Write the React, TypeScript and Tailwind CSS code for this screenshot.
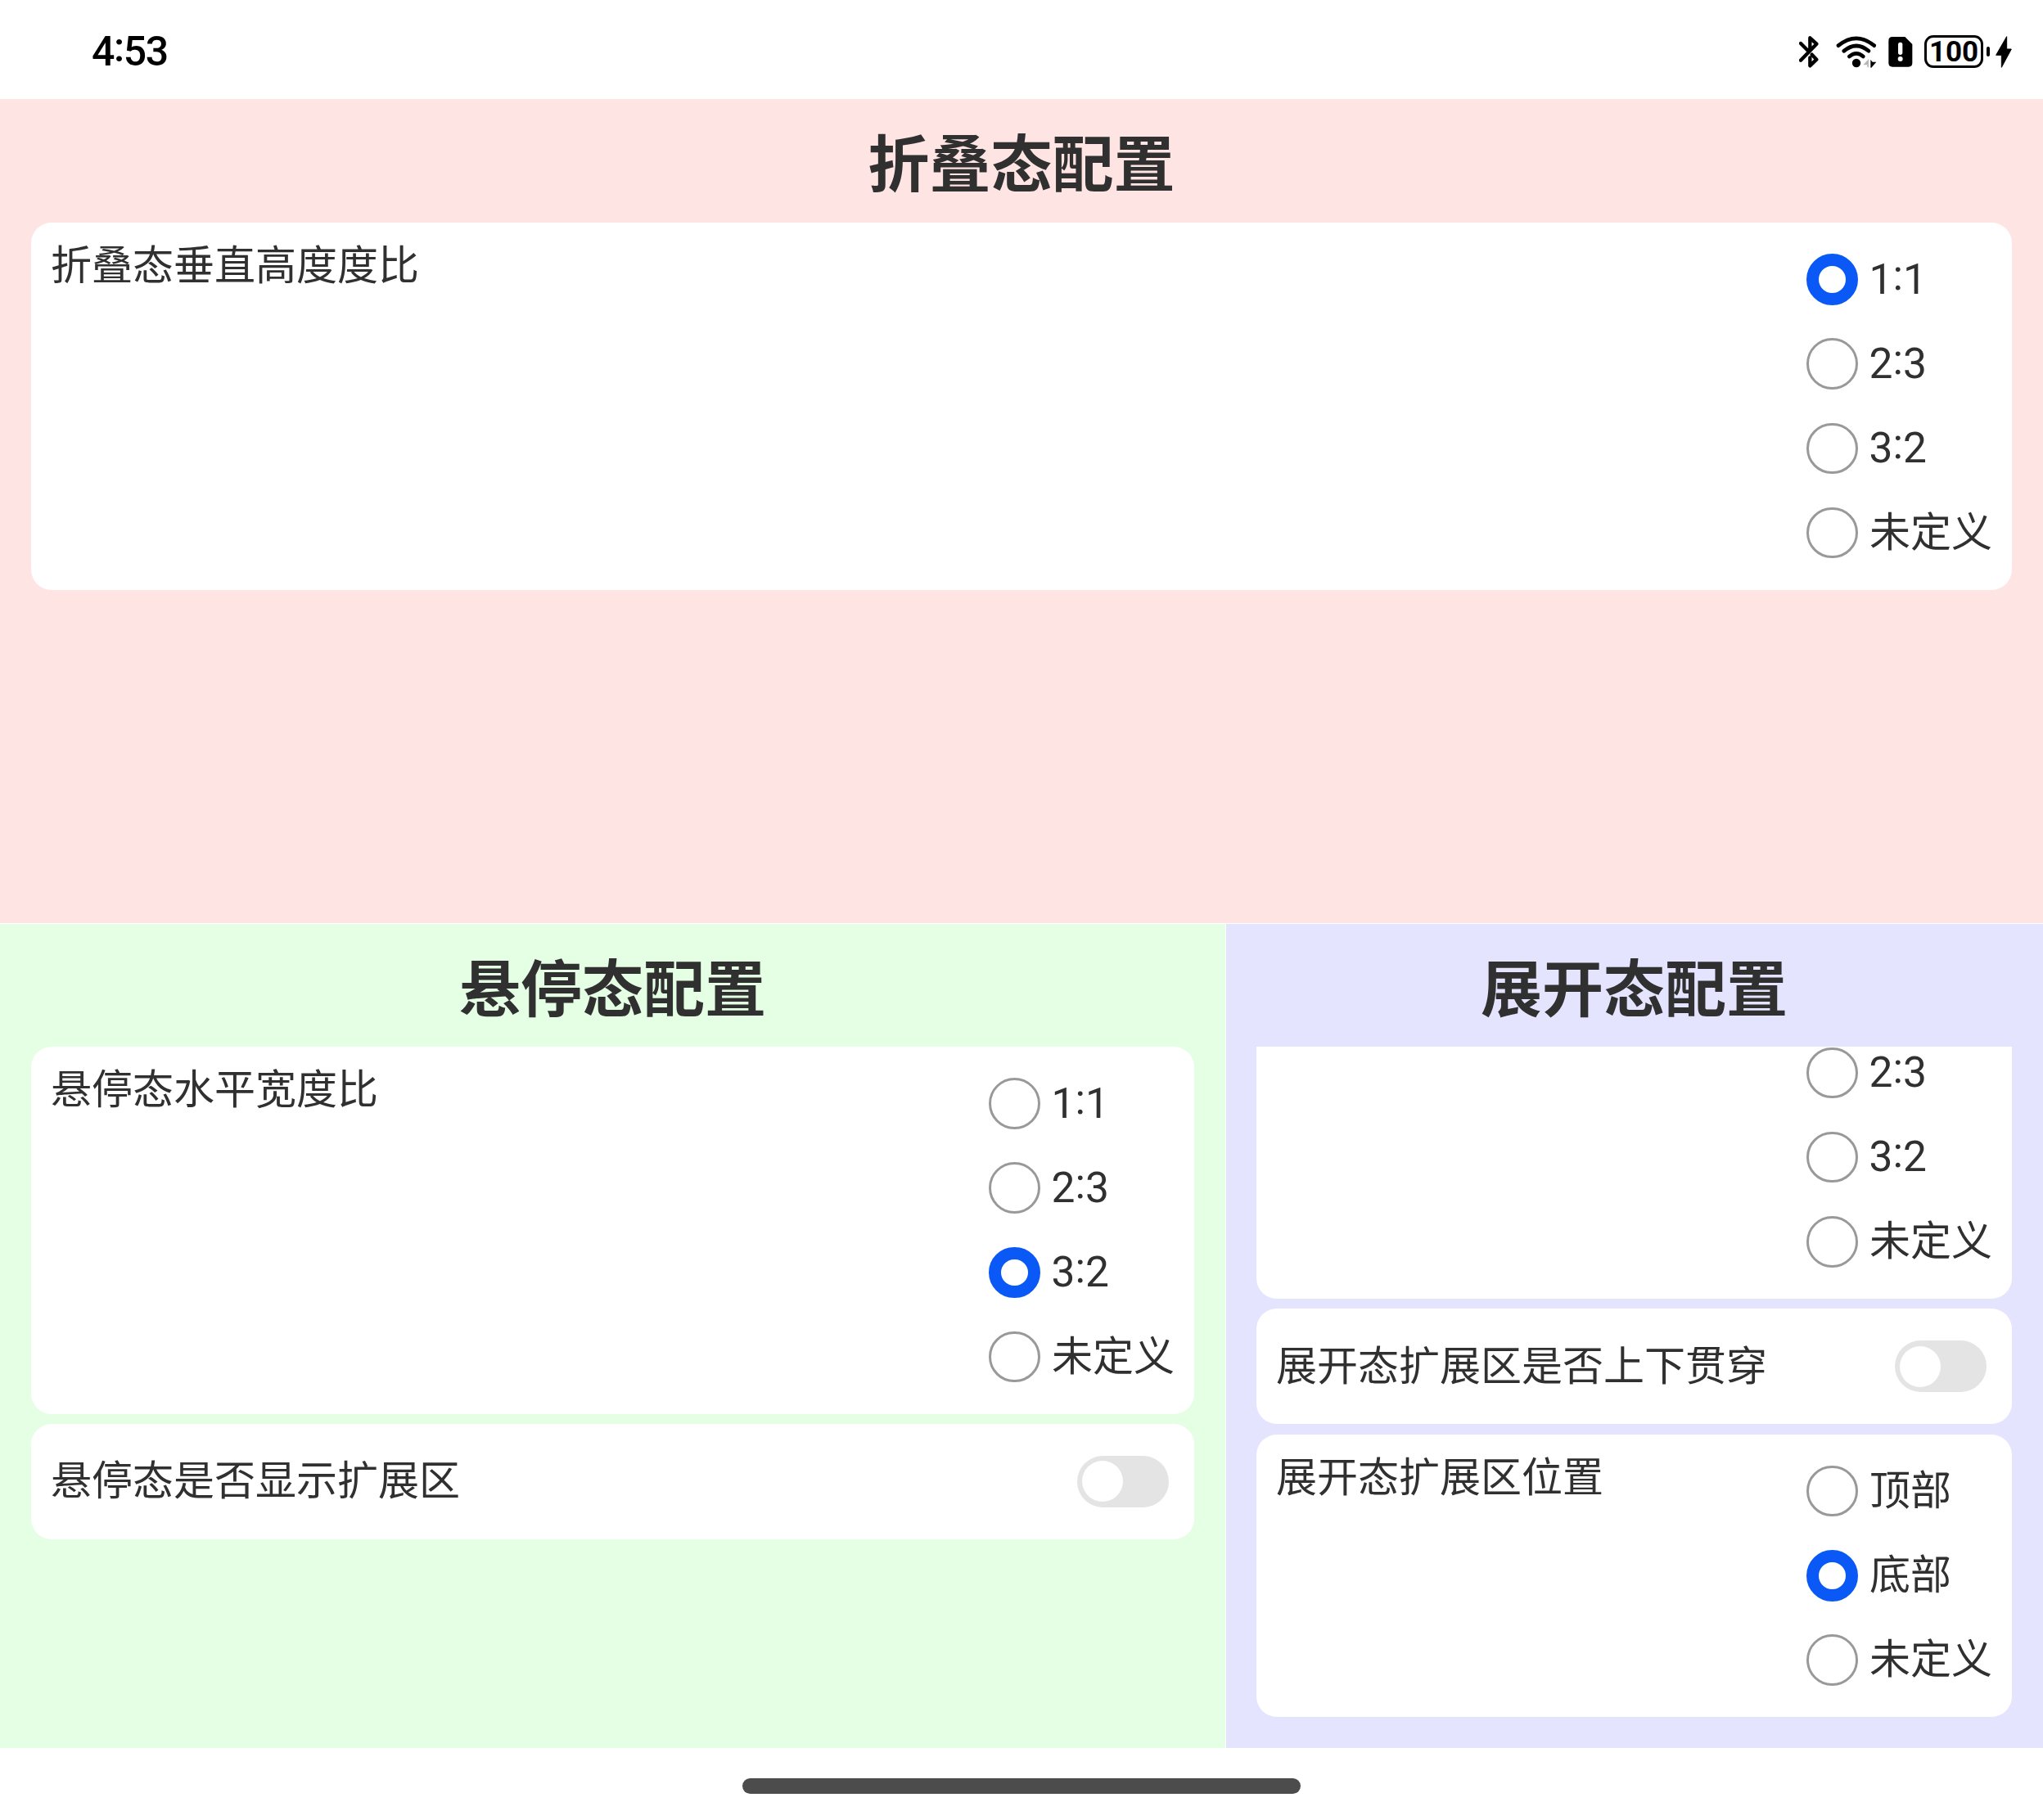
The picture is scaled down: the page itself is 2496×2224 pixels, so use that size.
import React from 'react';

const FONT = "font-['Roboto','Noto_Sans_CJK_SC',sans-serif]";

function Ratio({ text }: { text: string }) {
  const [left, right] = text.split(':');
  if (right === undefined) return <>{text}</>;
  return (
    <>
      {left}
      <span className="relative -top-[0.1em]">:</span>
      {right}
    </>
  );
}

function Radio({ label, checked }: { label: string; checked?: boolean }) {
  const isRatio = label.includes(':');
  return (
    <div className="flex h-[103.1px] items-center">
      <div
        className={
          checked
            ? 'size-[62.5px] shrink-0 rounded-full border-[15.6px] border-[#0a59f7] bg-white'
            : 'size-[62.5px] shrink-0 rounded-full border-[3px] border-[#999999] bg-white'
        }
      />
      <span
        className={
          isRatio
            ? 'ml-[14px] whitespace-nowrap text-[51.5px] leading-[66px]'
            : 'ml-[14.5px] whitespace-nowrap text-[50px] leading-[66px]'
        }
      >
        <Ratio text={label} />
      </span>
    </div>
  );
}

function RadioCard({ label, options, value }: { label?: string; options: string[]; value?: string }) {
  return (
    <div className="flex shrink-0 justify-between rounded-[25px] bg-white py-[18.1px] pl-[24px] pr-[25px]">
      <div className="whitespace-nowrap pt-[2px] text-[50px] leading-[66px]">{label}</div>
      <div className="flex w-[226px] flex-col">
        {options.map((o) => (
          <Radio key={o} label={o} checked={o === value} />
        ))}
      </div>
    </div>
  );
}

function ToggleCard({ label }: { label: string }) {
  return (
    <div className="flex h-[140.6px] shrink-0 items-center justify-between rounded-[25px] bg-white pl-[24px] pr-[31px]">
      <div className="whitespace-nowrap text-[50px] leading-[66px]">{label}</div>
      <div className="flex h-[62.5px] w-[112.5px] items-center rounded-full bg-[#e4e4e4] pl-[6.25px]">
        <div className="size-[50px] rounded-full bg-white" />
      </div>
    </div>
  );
}

function Title({ children }: { children: string }) {
  return (
    <h1 className="flex h-full items-center justify-center pt-[11px] text-[75px] font-bold leading-[100px]">
      {children}
    </h1>
  );
}

function StatusIcons() {
  return (
    <div className="flex h-[42px] items-center">
      <svg className="h-[42px] w-[26px]" viewBox="56 65 78 126" fill="none" stroke="#000" strokeWidth="13" strokeLinecap="round" strokeLinejoin="round">
        <path d="M62 98 L88 124 M62 160 L120 100 L96 78 V122 M103 139 L120 157 L96 180 V150" />
      </svg>
      <svg className="ml-[18px] h-[42px] w-[52px]" viewBox="185 65 156 126" fill="none" stroke="#000" strokeWidth="14" strokeLinecap="round">
        <path d="M197 106 Q263 53 328 106" />
        <path d="M217 126 Q263 88 308 126" />
        <path d="M237 146 Q263 124 288 146" />
        <circle cx="263" cy="170" r="15.5" fill="#000" stroke="none" />
        <path d="M308 155 V186 H303 V177 H288 Z" fill="#b8b8b8" stroke="none" />
        <path d="M315 158 L322 166 H336 L318 187 H315 Z" fill="#000" stroke="none" />
      </svg>
      <svg className="ml-[13px] h-[42px] w-[30px]" viewBox="379 65 90 126">
        <path d="M394 74 H440 L467 101 V170 Q467 184 453 184 H394 Q380 184 380 170 V88 Q380 74 394 74 Z" fill="#000" />
        <path d="M423 102 V132" stroke="#fff" strokeWidth="16" strokeLinecap="round" />
        <circle cx="423" cy="155" r="9" fill="#fff" />
      </svg>
      <div className="ml-[14px] flex h-[40px] w-[72px] items-center justify-center rounded-[11px] border-[3px] border-black pt-[2px] text-[35px] font-bold leading-none">
        100
      </div>
      <div className="ml-[4px] h-[12px] w-[4px] rounded-[2px] bg-black" />
      <svg className="ml-[7px] h-[42px] w-[20px]" viewBox="773 65 60 126">
        <path d="M814 73 V119 H831 L795 186 V141 H775 Z" fill="#000" stroke="#000" strokeWidth="3" strokeLinejoin="round" />
      </svg>
    </div>
  );
}

export default function App() {
  return (
    <div className={`flex h-[2224px] w-[2496px] flex-col overflow-hidden bg-white text-[#303030] ${FONT}`}>
      <header className="flex h-[121px] shrink-0 items-center justify-between pl-[112px] pr-[38px] pt-[4px] text-black">
        <div className="text-[50px] font-medium leading-none tracking-[-1.4px]">
          <Ratio text="4:53" />
        </div>
        <StatusIcons />
      </header>

      <section className="flex h-[1007px] shrink-0 flex-col bg-[#ffe4e4] px-[38px]">
        <div className="h-[151px] shrink-0">
          <Title>折叠态配置</Title>
        </div>
        <RadioCard label="折叠态垂直高度度比" options={['1:1', '2:3', '3:2', '未定义']} value="1:1" />
      </section>

      <div className="mt-px flex h-[1007px] shrink-0">
        <section className="flex w-[1497px] flex-col bg-[#e4ffe3] pl-[38px] pr-[38px]">
          <div className="h-[150px] shrink-0">
            <Title>悬停态配置</Title>
          </div>
          <div className="flex flex-col gap-[12.5px]">
            <RadioCard label="悬停态水平宽度比" options={['1:1', '2:3', '3:2', '未定义']} value="3:2" />
            <ToggleCard label="悬停态是否显示扩展区" />
          </div>
        </section>
        <section className="ml-px flex w-[998px] flex-col bg-[#e4e4ff] pb-[38px] pl-[37px] pr-[38px]">
          <div className="h-[150px] shrink-0">
            <Title>展开态配置</Title>
          </div>
          <div className="flex min-h-0 flex-1 flex-col justify-end gap-[12.5px] overflow-hidden">
            <RadioCard options={['1:1', '2:3', '3:2', '未定义']} />
            <ToggleCard label="展开态扩展区是否上下贯穿" />
            <RadioCard label="展开态扩展区位置" options={['顶部', '底部', '未定义']} value="底部" />
          </div>
        </section>
      </div>

      <footer className="flex justify-center pt-[37px]">
        <div className="h-[18.5px] w-[682px] rounded-full bg-[#4c4c4c]" />
      </footer>
    </div>
  );
}
